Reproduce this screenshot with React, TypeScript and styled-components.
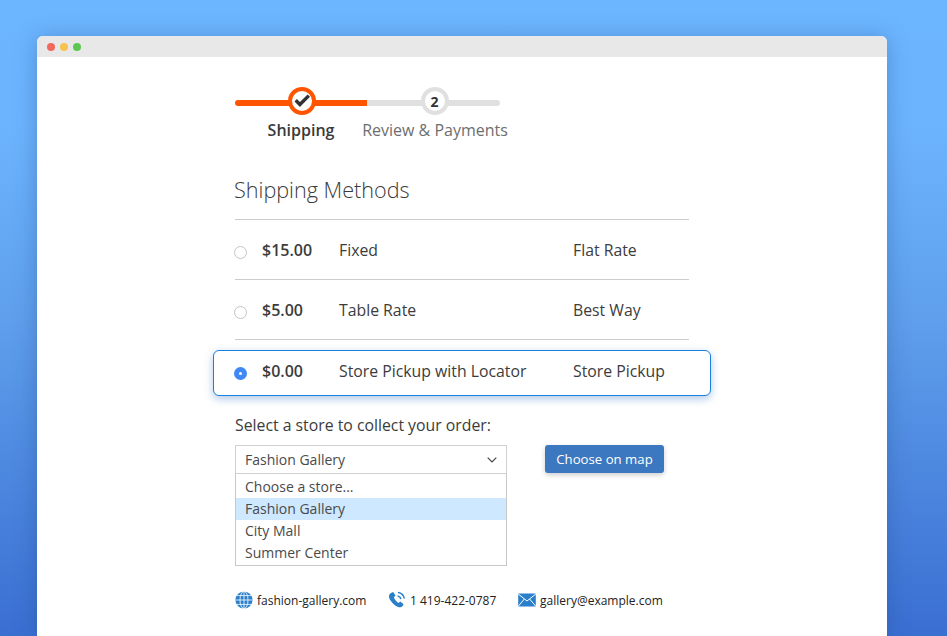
import React from "react";
import styled, { createGlobalStyle } from "styled-components";

const Global = createGlobalStyle`
  html, body { margin: 0; padding: 0; height: 636px; overflow: hidden; }
  body { font-family: "Open Sans", "Liberation Sans", sans-serif; color: #333; }
  * { box-sizing: border-box; }
`;
const Page = styled.div`
  height: 636px; overflow: hidden; padding: 36px 60px 0 37px;
  background: linear-gradient(180deg, #6cb6ff 0%, #6cb4fd 20%, #5f9fec 50%, #3a6fd2 100%);
`;
const Win = styled.div`
  width: 850px; height: 600px; background: #fff; border-radius: 6px 6px 0 0; overflow: hidden;
  box-shadow: 0 2px 22px rgba(30, 70, 130, 0.35);
`;
const TitleBar = styled.div`
  height: 21px; background: #e8e8e8; display: flex; align-items: center; gap: 5px; padding-left: 10px;
`;
const Dot = styled.span<{ $c: string }>`
  width: 8px; height: 8px; border-radius: 50%; background: ${p => p.$c};
`;
const Content = styled.div`
  width: 454px; margin-left: 198px; padding-top: 30px;
`;
const Stepper = styled.div`
  display: flex; width: 265px;
`;
const Step = styled.div<{ $w: number }>`
  flex: 0 0 ${p => p.$w}px; width: ${p => p.$w}px; display: flex; flex-direction: column; align-items: center;
  position: relative; white-space: nowrap;
`;
const Track = styled.div<{ $active?: boolean; $side: "l" | "r" }>`
  align-self: stretch; height: 6px; margin-top: 13px;
  background: ${p => (p.$active ? "#ff5501" : "#e0e0e0")};
  border-radius: ${p => (p.$side === "l" ? "3px 0 0 3px" : "0 3px 3px 0")};
`;
const Circle = styled.div<{ $active?: boolean }>`
  position: absolute; top: 0; left: 50%; margin-left: -13px; width: 28px; height: 28px; border-radius: 50%;
  background: #fff; border: 4px solid ${p => (p.$active ? "#ff5501" : "#e0e0e0")};
  display: flex; align-items: center; justify-content: center;
  font-size: 14px; font-weight: 700; color: #333;
`;
const StepLabel = styled.div<{ $active?: boolean; $shift?: number }>`
  margin-top: 13px; font-size: 16px; line-height: 22px; font-weight: ${p => (p.$active ? 600 : 400)};
  color: ${p => (p.$active ? "#3a3a3a" : "#6e6e6e")};
  padding-left: ${p => p.$shift ?? 0}px;
`;
const Title = styled.h2`
  margin: 34px 0 0 -1px; font-size: 21.6px; line-height: 30px; font-weight: 300; color: #3a3a3a;
  padding-bottom: 14px;
`;
const MethodRow = styled.div`
  display: grid; grid-template-columns: 27px 77px 234px 1fr; align-items: center;
  height: 60px; border-top: 1px solid #ccc; font-size: 15.8px; color: #3c3c3c;
`;
const SelectedRow = styled.div`
  display: grid; grid-template-columns: 28px 77px 234px 1fr; align-items: center;
  height: 46px; margin: 0 -22px; padding: 0 0 5px 20px; font-size: 15.8px; color: #3c3c3c;
  border: 1px solid #1b80dc; border-radius: 6px; background: #fff;
  box-shadow: 0 3px 8px rgba(60, 120, 200, 0.4);
`;
const Divider = styled.div`
  border-top: 1px solid #ccc; height: 11px;
`;
const Radio = styled.span<{ $on?: boolean }>`
  width: 13px; height: 13px; border-radius: 50%; margin-top: 5px;
  border: ${p => (p.$on ? "5px solid #3f88f5" : "1px solid #c4c4c4")};
  background: #fff; margin-left: ${p => (p.$on ? "0" : "-1px")};
`;
const Price = styled.span`
  font-weight: 600; font-size: 16px;
`;
const SelectLabel = styled.div`
  margin-top: 18px; font-size: 15.8px; line-height: 22px; color: #3c3c3c;
`;
const SelectRow = styled.div`
  display: flex; align-items: flex-start; margin-top: 9px;
`;
const SelectWrap = styled.div`
  width: 272px; font-size: 14px; color: #4a4a4a;
`;
const SelectBox = styled.div`
  height: 29px; border: 1px solid #d0d0d0; display: flex; align-items: center; justify-content: space-between;
  padding: 0 9px; background: #fff;
`;
const OptionList = styled.div`
  border: 1px solid #c8c8c8; border-top: 0; height: 92px; padding-top: 2px;
`;
const Option = styled.div<{ $on?: boolean }>`
  height: 22px; line-height: 22px; padding-left: 9px; background: ${p => (p.$on ? "#cde8ff" : "#fff")};
`;
const MapButton = styled.button`
  margin-left: 38px; width: 119px; height: 28px; border: 0; border-radius: 3px; padding: 0;
  background: #3c78bf; color: #fff; font: 500 13.2px "Open Sans", sans-serif;
  box-shadow: 0 2px 5px rgba(0, 0, 0, 0.2);
`;
const Contacts = styled.div`
  display: flex; margin-top: 25px; font-size: 12px; color: #222; align-items: center;
`;
const Contact = styled.div<{ $w: number }>`
  display: flex; align-items: center; gap: 4px; width: ${p => p.$w}px; white-space: nowrap;
`;

const Check = () => (
  <svg width="18" height="16" viewBox="0 0 18 16">
    <path d="M1.500 8.500l2.400-2.400 3 3L14.600 1.400 17 3.800 6.900 14z" fill="#333" />
  </svg>
);
const Globe = () => (
  <svg width="18" height="18" viewBox="0 0 18 18" fill="none">
    <circle cx="9" cy="9" r="8.600" fill="#2a7fcb" />
    <g stroke="#fff" strokeWidth="0.800">
      <ellipse cx="9" cy="9" rx="4" ry="8.600" />
      <path d="M9 .4v17.200M.4 9h17.200M1.800 4.600h14.400M1.800 13.400h14.400" />
    </g>
  </svg>
);
const Phone = () => (
  <svg width="18" height="18" viewBox="0 0 18 18" fill="none">
    <path d="M3.400 1.800 5.200 1l2.300 3.600-1.600 1.700c.5 2 2.300 4.400 4.600 5.600l1.700-1.300 3.400 2.700-1 1.600c-.9 1.400-2.800 1.900-4.600 1C6.300 14.500 2 10 1 6.200.6 4.400 1.800 2.700 3.400 1.800z" fill="#2a7fcb" />
    <path d="M9.500 4.800c1.800.3 3 1.500 3.400 3.300M10 1.500c3.200.4 5.800 3 6.300 6.200" stroke="#2a7fcb" strokeWidth="1.300" />
  </svg>
);
const Mail = () => (
  <svg width="18" height="14" viewBox="0 0 18 14" fill="none">
    <rect x="0.200" y="0.500" width="17.600" height="13" fill="#2a7fcb" />
    <path d="M0 .8 9 8l9-7.200M0 13.500l6.400-7.500M18 13.500l-6.400-7.500" stroke="#fff" strokeWidth="1" />
  </svg>
);
const Chevron = () => (
  <svg width="10" height="6" viewBox="0 0 10 6" fill="none">
    <path d="M.7.7 5 5 9.300.7" stroke="#444" strokeWidth="1.200" />
  </svg>
);

export default function App() {
  return (
    <>
      <Global />
      <Page>
        <Win>
          <TitleBar>
            <Dot $c="#f0695f" />
            <Dot $c="#f7c34f" />
            <Dot $c="#5cc84f" />
          </TitleBar>
          <Content>
            <Stepper>
              <Step $w={132}>
                <Track $active $side="l" />
                <Circle $active><Check /></Circle>
                <StepLabel $active>Shipping</StepLabel>
              </Step>
              <Step $w={133}>
                <Track $side="r" />
                <Circle>2</Circle>
                <StepLabel $shift={3}>Review &amp; Payments</StepLabel>
              </Step>
            </Stepper>
            <Title>Shipping Methods</Title>
            <MethodRow>
              <Radio />
              <Price>$15.00</Price>
              <span>Fixed</span>
              <span>Flat Rate</span>
            </MethodRow>
            <MethodRow>
              <Radio />
              <Price>$5.00</Price>
              <span>Table Rate</span>
              <span>Best Way</span>
            </MethodRow>
            <Divider />
            <SelectedRow>
              <Radio $on />
              <Price>$0.00</Price>
              <span>Store Pickup with Locator</span>
              <span>Store Pickup</span>
            </SelectedRow>
            <SelectLabel>Select a store to collect your order:</SelectLabel>
            <SelectRow>
              <SelectWrap>
                <SelectBox>
                  <span>Fashion Gallery</span>
                  <Chevron />
                </SelectBox>
                <OptionList>
                  <Option>Choose a store...</Option>
                  <Option $on>Fashion Gallery</Option>
                  <Option>City Mall</Option>
                  <Option>Summer Center</Option>
                </OptionList>
              </SelectWrap>
              <MapButton>Choose on map</MapButton>
            </SelectRow>
            <Contacts>
              <Contact $w={153}><Globe />fashion-gallery.com</Contact>
              <Contact $w={130}><Phone />1 419-422-0787</Contact>
              <Contact $w={160}><Mail />gallery@example.com</Contact>
            </Contacts>
          </Content>
        </Win>
      </Page>
    </>
  );
}
